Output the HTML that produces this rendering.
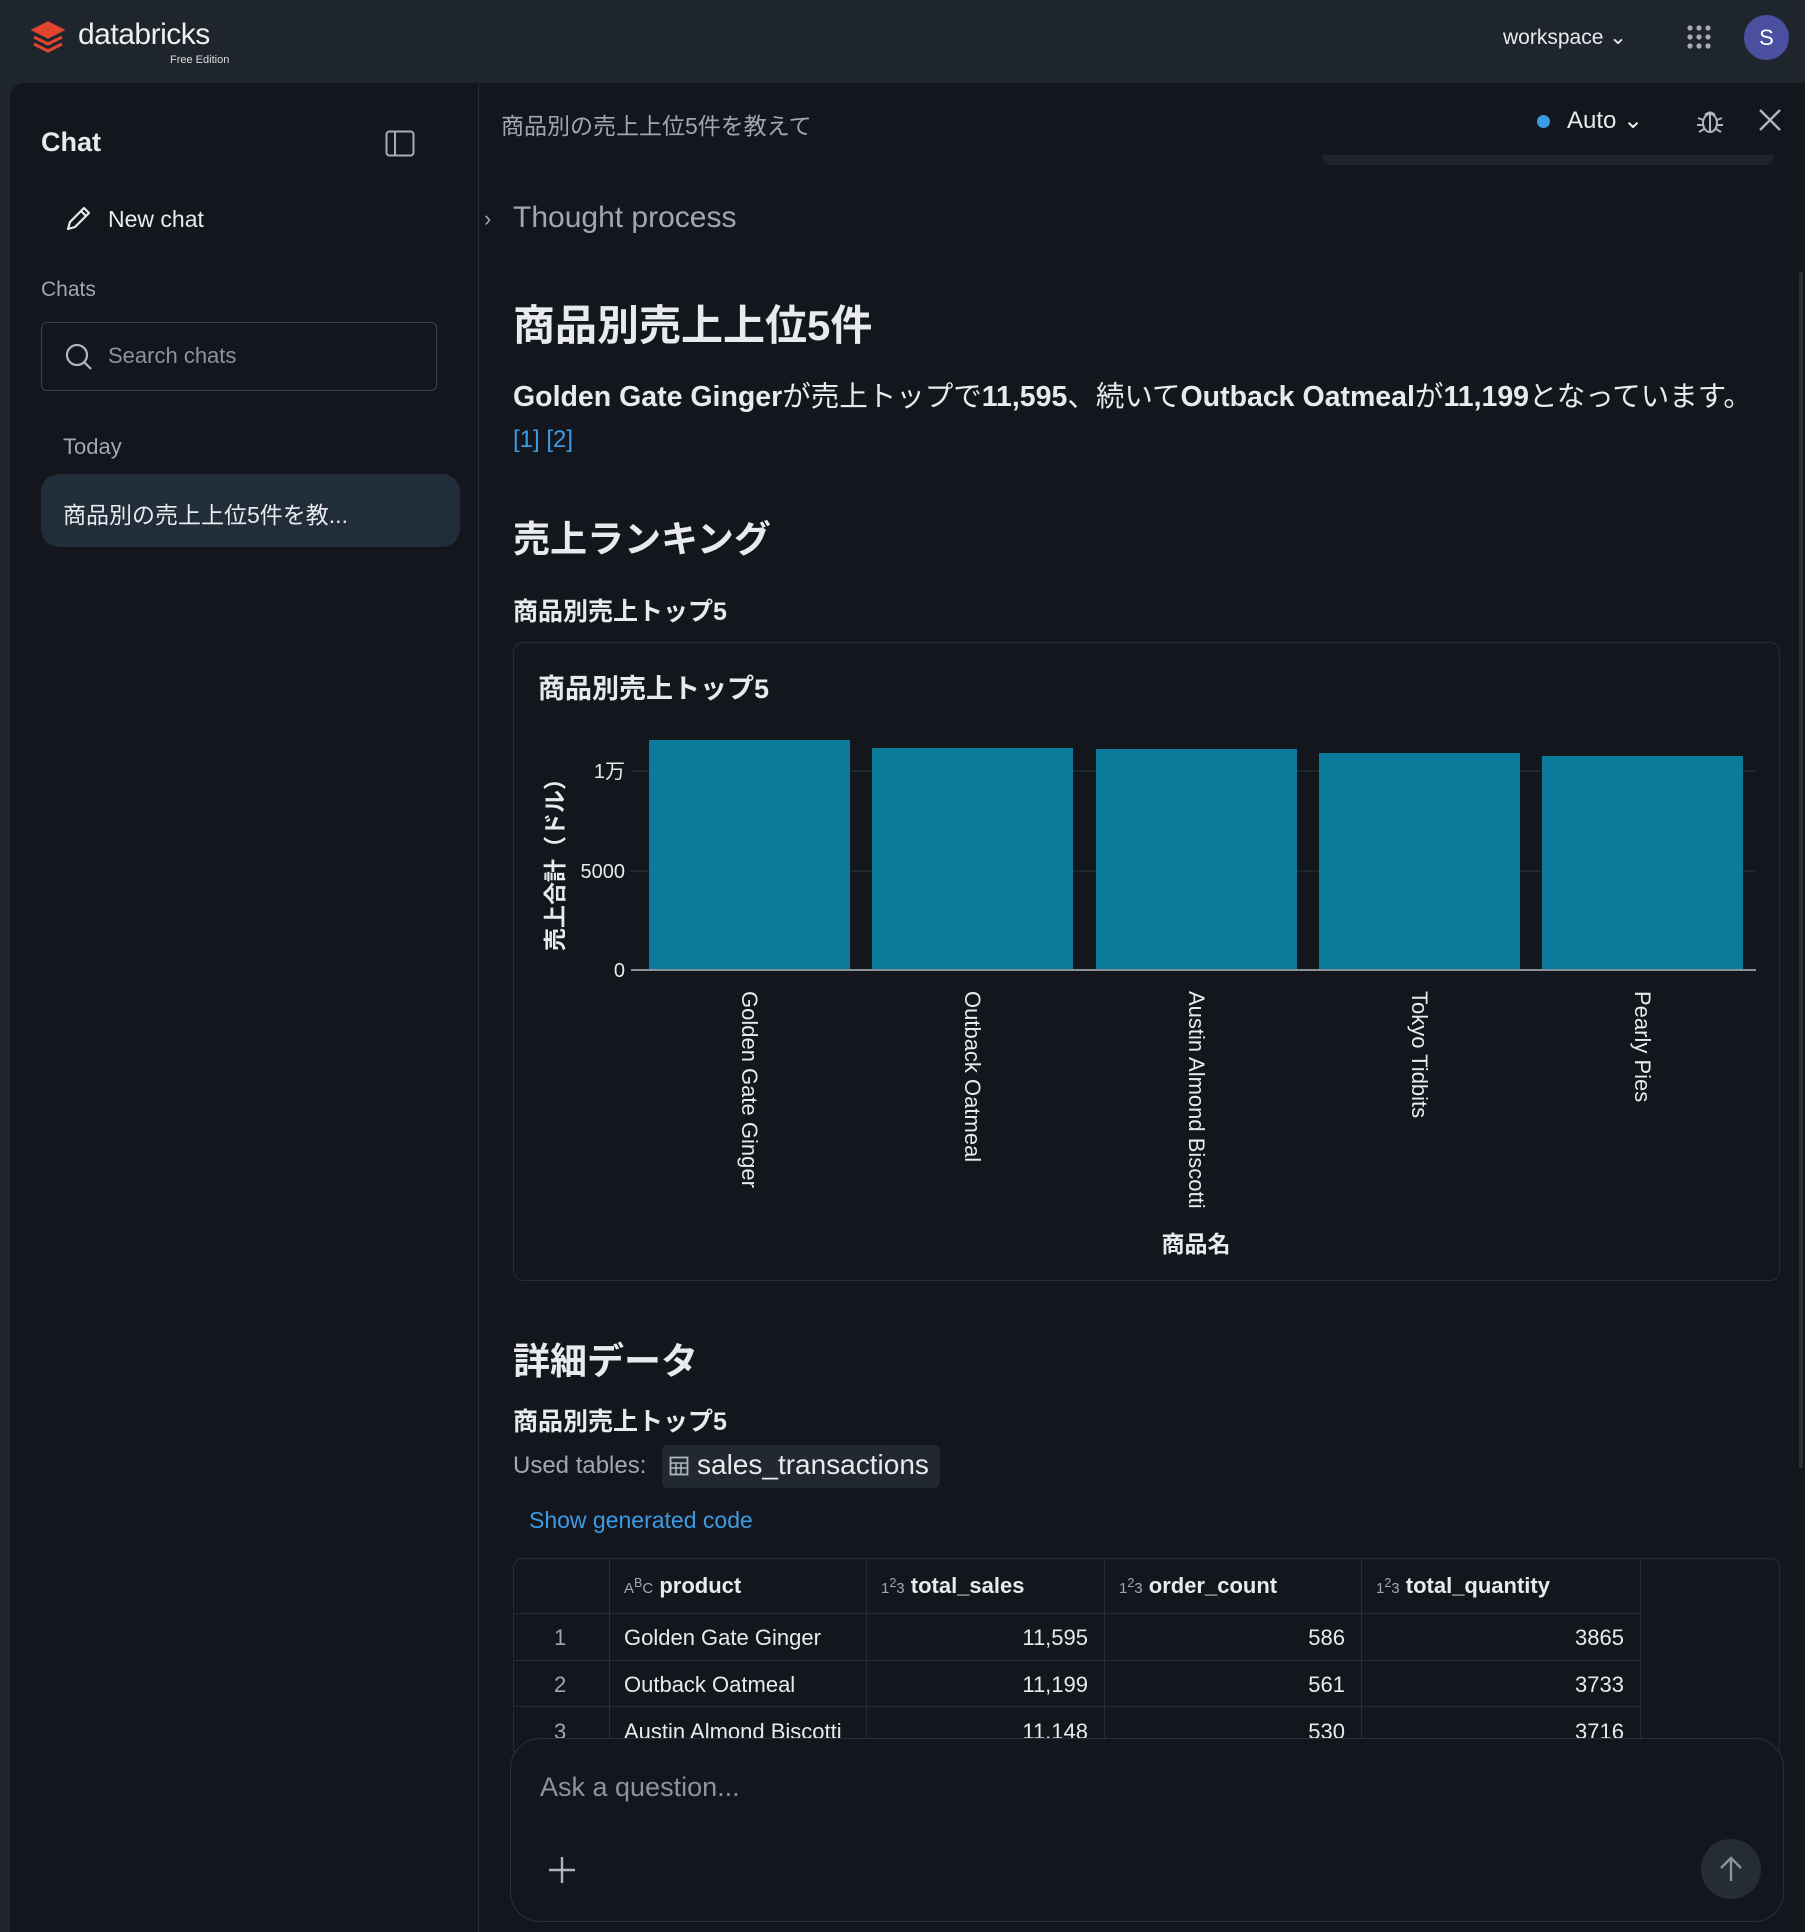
<!DOCTYPE html>
<html><head><meta charset="utf-8"><style>
*{margin:0;padding:0;box-sizing:border-box}
body{width:1805px;height:1932px;background:#1f252d;font-family:"Liberation Sans","Noto Sans CJK JP",sans-serif;color:#e8eaed;position:relative;overflow:hidden}
.a{position:absolute;white-space:nowrap}
.main{position:absolute;left:10px;top:83px;width:1795px;height:1849px;background:#13171d;border-top-left-radius:14px}
.b{font-weight:700}
</style></head><body>
<svg class="a" style="left:31px;top:20px" width="34" height="36" viewBox="0 0 34 36"><g fill="none" stroke="#e0452e" stroke-width="3.2"><path d="M3 10 L17 3 L31 10 L17 17 Z" fill="#e0452e"/><path d="M3 17 L17 24 L31 17"/><path d="M3 24 L17 31 L31 24"/></g></svg>
<div class="a" style="left:78px;top:18px;font-size:30px;color:#f0f0f0;letter-spacing:-0.5px">databricks</div>
<div class="a" style="left:170px;top:54px;font-size:11px;color:#ddd">Free Edition</div>
<div class="a" style="left:1503px;top:25px;font-size:21px;color:#e8eaed">workspace ⌄</div>
<svg class="a" style="left:1686px;top:24px" width="26" height="26"><g fill="#aab"><circle cx="4" cy="4" r="2.6"/><circle cx="13" cy="4" r="2.6"/><circle cx="22" cy="4" r="2.6"/><circle cx="4" cy="13" r="2.6"/><circle cx="13" cy="13" r="2.6"/><circle cx="22" cy="13" r="2.6"/><circle cx="4" cy="22" r="2.6"/><circle cx="13" cy="22" r="2.6"/><circle cx="22" cy="22" r="2.6"/></g></svg>
<div class="a" style="left:1744px;top:15px;width:45px;height:45px;border-radius:50%;background:#4a4fa0;color:#fff;font-size:22px;text-align:center;line-height:45px">S</div>

<div class="main"></div>
<div class="a" style="left:478px;top:83px;width:1px;height:1849px;background:#262c34"></div>
<div class="a b" style="left:41px;top:127px;font-size:27px">Chat</div>
<svg class="a" style="left:385px;top:130px" width="30" height="27"><rect x="1.5" y="1.5" width="27" height="24" rx="3" fill="none" stroke="#aab" stroke-width="2"/><line x1="10" y1="2" x2="10" y2="25" stroke="#aab" stroke-width="2"/></svg>
<svg class="a" style="left:63px;top:204px" width="30" height="30"><path d="M5 25 L7 18 L21 4 L26 9 L12 23 Z M18 7 L23 12" fill="none" stroke="#e8eaed" stroke-width="2.2" stroke-linejoin="round"/></svg>
<div class="a" style="left:108px;top:206px;font-size:23px">New chat</div>
<div class="a" style="left:41px;top:278px;font-size:21px;color:#a0a7b0">Chats</div>
<div class="a" style="left:41px;top:322px;width:396px;height:69px;border:1px solid #3a414b;border-radius:6px"></div>
<svg class="a" style="left:64px;top:342px" width="30" height="30"><circle cx="13" cy="13" r="10" fill="none" stroke="#b0b6bd" stroke-width="2.2"/><line x1="20" y1="20" x2="27" y2="27" stroke="#b0b6bd" stroke-width="2.2"/></svg>
<div class="a" style="left:108px;top:343px;font-size:22px;color:#8c939c">Search chats</div>
<div class="a" style="left:63px;top:434px;font-size:22px;color:#a0a7b0">Today</div>
<div class="a" style="left:41px;top:474px;width:419px;height:73px;background:#222d3a;border-radius:18px"></div>
<div class="a" style="left:63px;top:496px;font-size:23px">商品別の売上上位5件を教...</div>
<div class="a" style="left:501px;top:107px;font-size:23px;color:#a0a7b0">商品別の売上上位5件を教えて</div>
<div class="a" style="left:1537px;top:115px;width:13px;height:13px;border-radius:50%;background:#3b9ce6"></div>
<div class="a" style="left:1567px;top:106px;font-size:24px">Auto ⌄</div>
<svg class="a" style="left:1695px;top:106px" width="30" height="30"><g fill="none" stroke="#b0b6bd" stroke-width="2"><ellipse cx="15" cy="17" rx="7" ry="9"/><path d="M10 9 Q15 4 20 9 M15 9 V26 M3 12 L8 14 M27 12 L22 14 M2 19 H8 M28 19 H22 M4 26 L9 23 M26 26 L21 23"/></g></svg>
<svg class="a" style="left:1757px;top:107px" width="26" height="26"><path d="M3 3 L23 23 M23 3 L3 23" stroke="#b0b6bd" stroke-width="2.4"/></svg>
<div class="a" style="left:1322px;top:155px;width:452px;height:10px;background:#1f252d;border-radius:0 0 14px 14px"></div>
<div class="a" style="left:1799px;top:272px;width:4px;height:1196px;background:#2a3038;border-radius:2px"></div>
<div class="a" style="left:484px;top:206px;font-size:22px;color:#a0a7b0">›</div>
<div class="a" style="left:513px;top:201px;font-size:30px;color:#a0a7b0">Thought process</div>
<div class="a b" style="left:513px;top:292px;font-size:42px">商品別売上上位5件</div>
<div class="a" style="left:513px;top:374px;font-size:28.5px"><b>Golden Gate Ginger</b>が売上トップで<b>11,595</b>、続いて<b>Outback Oatmeal</b>が<b>11,199</b>となっています。</div>
<div class="a" style="left:513px;top:426px;font-size:24px;color:#3b9ce6">[1] [2]</div>
<div class="a b" style="left:513px;top:509px;font-size:37px">売上ランキング</div>
<div class="a b" style="left:513px;top:592px;font-size:25px">商品別売上トップ5</div>
<div class="a" style="left:513px;top:642px;width:1267px;height:639px;border:1px solid #262c34;border-radius:10px"></div>
<div class="a b" style="left:538px;top:667px;font-size:27px">商品別売上トップ5</div>
<svg class="a" style="left:513px;top:642px" width="1267" height="639">
<g stroke="#2e343c" stroke-width="1"><line x1="118" y1="129" x2="1243" y2="129"/><line x1="118" y1="229" x2="1243" y2="229"/></g>
<g fill="#0a7b9b"><rect x="136" y="98" width="201" height="230"/><rect x="359" y="106" width="201" height="222"/><rect x="583" y="107" width="201" height="221"/><rect x="806" y="111" width="201" height="217"/><rect x="1029" y="114" width="201" height="214"/></g>
<line x1="118" y1="328" x2="1243" y2="328" stroke="#8a9099" stroke-width="2"/>
<g font-size="20" fill="#e8eaed" text-anchor="end" font-family="Liberation Sans,Noto Sans CJK JP,sans-serif"><text x="112" y="136">1万</text><text x="112" y="236">5000</text><text x="112" y="335">0</text></g>
<g font-size="22" fill="#e8eaed" font-family="Liberation Sans,sans-serif">
<text transform="translate(229,349) rotate(90)">Golden Gate Ginger</text>
<text transform="translate(452,349) rotate(90)">Outback Oatmeal</text>
<text transform="translate(676,349) rotate(90)">Austin Almond Biscotti</text>
<text transform="translate(899,349) rotate(90)">Tokyo Tidbits</text>
<text transform="translate(1122,349) rotate(90)">Pearly Pies</text></g>
<text transform="translate(50,217) rotate(-90)" text-anchor="middle" font-size="23" font-weight="700" fill="#e8eaed" font-family="Liberation Sans,Noto Sans CJK JP,sans-serif">売上合計（ドル）</text>
<text x="683" y="610" text-anchor="middle" font-size="23" font-weight="700" fill="#e8eaed" font-family="Liberation Sans,Noto Sans CJK JP,sans-serif">商品名</text>
</svg>
<div class="a b" style="left:513px;top:1331px;font-size:37px">詳細データ</div>
<div class="a b" style="left:513px;top:1402px;font-size:25px">商品別売上トップ5</div>
<div class="a" style="left:513px;top:1452px;font-size:24px;color:#a0a7b0">Used tables:</div>
<div class="a" style="left:662px;top:1445px;width:278px;height:43px;background:#222830;border-radius:6px"></div>
<svg class="a" style="left:669px;top:1456px" width="20" height="20"><rect x="1.5" y="1.5" width="17" height="17" fill="none" stroke="#b0b6bd" stroke-width="1.8"/><path d="M2 7 H18 M2 12 H18 M7 7 V18 M12 7 V18" stroke="#b0b6bd" stroke-width="1.5"/></svg>
<div class="a" style="left:697px;top:1449px;font-size:28px">sales_transactions</div>
<div class="a" style="left:529px;top:1507px;font-size:23px;color:#3b9ce6">Show generated code</div>
<div class="a" style="left:513px;top:1558px;width:1267px;height:200px;border:1px solid #262c34;border-radius:10px;overflow:hidden;font-size:22px">
<div class="a" style="left:0;top:54px;width:1126px;height:1px;background:#262c34"></div>
<div class="a" style="left:0;top:101px;width:1126px;height:1px;background:#262c34"></div>
<div class="a" style="left:0;top:147px;width:1126px;height:1px;background:#262c34"></div>
<div class="a" style="left:95px;top:0;width:1px;height:200px;background:#262c34"></div>
<div class="a" style="left:352px;top:0;width:1px;height:200px;background:#262c34"></div>
<div class="a" style="left:590px;top:0;width:1px;height:200px;background:#262c34"></div>
<div class="a" style="left:847px;top:0;width:1px;height:200px;background:#262c34"></div>
<div class="a" style="left:1126px;top:0;width:1px;height:200px;background:#262c34"></div>
<div class="a b" style="left:110px;top:14px"><span style="font-size:15px;color:#a0a7b0;font-weight:400">A<sup>B</sup>C</span> product</div>
<div class="a b" style="left:367px;top:14px"><span style="font-size:15px;color:#a0a7b0;font-weight:400">1<sup>2</sup>3</span> total_sales</div>
<div class="a b" style="left:605px;top:14px"><span style="font-size:15px;color:#a0a7b0;font-weight:400">1<sup>2</sup>3</span> order_count</div>
<div class="a b" style="left:862px;top:14px"><span style="font-size:15px;color:#a0a7b0;font-weight:400">1<sup>2</sup>3</span> total_quantity</div>
<div class="a" style="left:40px;top:66px;color:#a0a7b0">1</div><div class="a" style="left:110px;top:66px">Golden Gate Ginger</div><div class="a" style="right:691px;top:66px">11,595</div><div class="a" style="right:434px;top:66px">586</div><div class="a" style="right:155px;top:66px">3865</div>
<div class="a" style="left:40px;top:113px;color:#a0a7b0">2</div><div class="a" style="left:110px;top:113px">Outback Oatmeal</div><div class="a" style="right:691px;top:113px">11,199</div><div class="a" style="right:434px;top:113px">561</div><div class="a" style="right:155px;top:113px">3733</div>
<div class="a" style="left:40px;top:160px;color:#a0a7b0">3</div><div class="a" style="left:110px;top:160px">Austin Almond Biscotti</div><div class="a" style="right:691px;top:160px">11,148</div><div class="a" style="right:434px;top:160px">530</div><div class="a" style="right:155px;top:160px">3716</div>
</div>
<div class="a" style="left:510px;top:1738px;width:1274px;height:184px;background:#13171d;border:1px solid #2a3038;border-radius:30px"></div>
<div class="a" style="left:540px;top:1772px;font-size:27px;color:#8c939c">Ask a question...</div>
<svg class="a" style="left:547px;top:1855px" width="30" height="30"><path d="M15 2 V28 M2 15 H28" stroke="#b0b6bd" stroke-width="2.4"/></svg>
<div class="a" style="left:1701px;top:1839px;width:60px;height:60px;border-radius:50%;background:#262c34"></div>
<svg class="a" style="left:1716px;top:1854px" width="30" height="30"><path d="M15 27 V4 M5 14 L15 4 L25 14" fill="none" stroke="#8c939c" stroke-width="2.4"/></svg>
</body></html>
